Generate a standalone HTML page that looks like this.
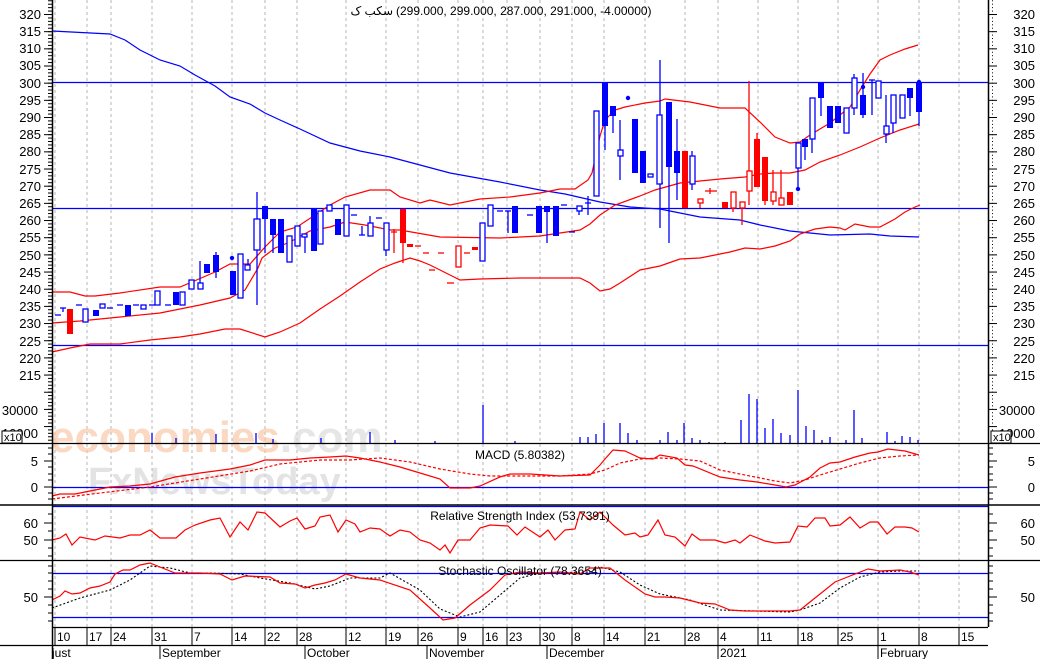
<!DOCTYPE html>
<html><head><meta charset="utf-8"><style>
html,body{margin:0;padding:0;background:#fff;width:1040px;height:659px;overflow:hidden}
svg{display:block}
text{font-family:"Liberation Sans","DejaVu Sans",sans-serif;font-size:13px;fill:#000}
.g{stroke:#b4b4b4;stroke-dasharray:3 3;stroke-width:1}
.f{fill:#0000ff}
.h{fill:#fff;stroke:#0000ff;stroke-width:1.3}
.r{fill:#ff0000}
.rh{fill:#fff;stroke:#ff0000;stroke-width:1.3}
.w{stroke:#0000ff;stroke-width:1.3}
.rw{stroke:#ff0000;stroke-width:1.3}
.rl{fill:none;stroke:#ff0000;stroke-width:1.2}
.bl{fill:none;stroke:#0000ff;stroke-width:1.2}
</style></head><body>
<svg width="1040" height="659" viewBox="0 0 1040 659" xmlns="http://www.w3.org/2000/svg">
<defs>
<pattern id="tk" x="0" y="14" width="8" height="3.433" patternUnits="userSpaceOnUse"><line x1="0" y1="0.5" x2="4" y2="0.5" stroke="#000" stroke-width="1"/></pattern>
<pattern id="tk2" x="0" y="14" width="8" height="17.17" patternUnits="userSpaceOnUse"><line x1="0" y1="0.5" x2="8" y2="0.5" stroke="#000" stroke-width="1"/></pattern>
</defs>
<!-- grid -->
<g class="g">
<line x1="55" y1="0" x2="55" y2="627"/><line x1="87" y1="0" x2="87" y2="627"/><line x1="111" y1="0" x2="111" y2="627"/><line x1="152" y1="0" x2="152" y2="627"/><line x1="192" y1="0" x2="192" y2="627"/><line x1="232" y1="0" x2="232" y2="627"/><line x1="265" y1="0" x2="265" y2="627"/><line x1="297" y1="0" x2="297" y2="627"/><line x1="346" y1="0" x2="346" y2="627"/><line x1="386" y1="0" x2="386" y2="627"/><line x1="418" y1="0" x2="418" y2="627"/><line x1="458" y1="0" x2="458" y2="627"/><line x1="483" y1="0" x2="483" y2="627"/><line x1="507" y1="0" x2="507" y2="627"/><line x1="540" y1="0" x2="540" y2="627"/><line x1="572" y1="0" x2="572" y2="627"/><line x1="604" y1="0" x2="604" y2="627"/><line x1="645" y1="0" x2="645" y2="627"/><line x1="685" y1="0" x2="685" y2="627"/><line x1="718" y1="0" x2="718" y2="627"/><line x1="758" y1="0" x2="758" y2="627"/><line x1="798" y1="0" x2="798" y2="627"/><line x1="838" y1="0" x2="838" y2="627"/><line x1="878" y1="0" x2="878" y2="627"/><line x1="919" y1="0" x2="919" y2="627"/><line x1="959" y1="0" x2="959" y2="627"/>
</g>
<!-- watermark -->
<text x="50" y="452" style="font-size:44px;fill:#f8c8a8;font-weight:bold;opacity:.7">economies<tspan style="fill:#dcdcdc">.com</tspan></text>
<text x="88" y="494" style="font-size:38px;fill:#d8d8d8;font-weight:bold;opacity:.7">FxNewsToday</text>
<!-- title -->
<text x="393" y="15" text-anchor="end" style="font-size:12px">سکب ک</text>
<text x="396" y="15" style="font-size:12px">(299.000, 299.000, 287.000, 291.000, -4.00000)</text>
<!-- horizontal price lines -->
<line x1="52" y1="82.5" x2="988" y2="82.5" stroke="#0000ff" stroke-width="1.3"/>
<line x1="52" y1="208.5" x2="988" y2="208.5" stroke="#0000ff" stroke-width="1.3"/>
<line x1="52" y1="345.5" x2="988" y2="345.5" stroke="#0000ff" stroke-width="1.3"/>
<!-- Bollinger & MA -->
<polyline class="bl" points="52,31 110,34 125,40 140,50 160,60 180,66 195,75 215,86 230,97 250,104 265,113 280,120 300,129 330,143 360,151 390,157 420,165 450,173 500,182 540,190 565,194 600,202 630,207 660,209 680,213 700,217 740,220 760,225 790,231 830,235 870,234 890,236 919,237"/>
<polyline class="rl" points="52,292 70,292 85,296 95,296 120,293 160,287 180,287 192,282 215,272 230,264 250,264 265,247 280,232 297,227 330,205 345,197 370,190 390,190 400,197 420,203 430,200 450,205 480,199 510,197 540,193 560,189 575,189 588,180 592,173 600,136 605,120 615,110 625,107 645,103 660,101 665,99 690,102 720,108 745,108 760,122 775,137 790,143 800,142 810,135 830,123 850,107 860,90 870,74 880,60 890,55 905,49 918,45"/>
<polyline class="rl" points="52,323 80,321 120,317 160,313 200,305 230,298 245,290 258,268 262,258 275,248 290,242 310,231 330,227 345,222 365,225 390,230 400,230 440,237 500,238 540,236 560,233 580,230 590,224 600,215 615,205 640,196 655,190 680,183 700,181 720,179 745,177 760,174 775,173 790,173 805,170 820,162 840,155 860,147 880,138 900,130 919,124"/>
<polyline class="rl" points="52,352 70,348 90,344 120,344 150,340 180,337 200,334 225,329 240,329 265,337 280,332 300,323 320,309 340,296 360,282 380,269 395,263 410,258 420,261 430,265 440,270 450,275 460,280 480,279 520,278 560,278 580,278 590,283 600,291 610,289 620,283 640,270 660,266 680,259 700,258 720,254 730,252 745,248 760,249 775,246 790,241 800,234 815,229 830,227 840,228 845,230 855,224 870,227 880,227 895,219 905,212 915,207 920,205"/>
<!-- candles -->
<g>
<line class="w" x1="55" y1="315" x2="61" y2="315"/><line class="w" x1="60" y1="308" x2="66" y2="308"/><line class="w" x1="63" y1="308" x2="63" y2="312"/>
<rect class="r" x="67" y="309" width="6" height="25"/>
<line class="w" x1="76" y1="305" x2="82" y2="305"/>
<rect class="h" x="83" y="309" width="5" height="13"/>
<rect class="f" x="93" y="310" width="6" height="6"/>
<rect class="h" x="100" y="304" width="5" height="4"/>
<line class="w" x1="107" y1="308" x2="113" y2="308"/><line class="w" x1="117" y1="305" x2="123" y2="305"/>
<rect class="f" x="125" y="305" width="6" height="11"/>
<line class="w" x1="133" y1="305" x2="139" y2="305"/>
<rect class="h" x="141" y="305" width="5" height="4"/>
<line class="w" x1="149" y1="305" x2="155" y2="305"/>
<rect class="h" x="155" y="291" width="5" height="14"/>
<line class="w" x1="165" y1="305" x2="171" y2="305"/>
<rect class="f" x="173" y="292" width="6" height="13"/>
<rect class="h" x="180" y="292" width="5" height="13"/>
<line class="w" x1="200" y1="261" x2="200" y2="283"/>
<rect class="h" x="189" y="280" width="5" height="9"/>
<rect class="h" x="198" y="283" width="5" height="6"/>
<rect class="f" x="204" y="264" width="6" height="9"/>
<line class="w" x1="216" y1="252" x2="216" y2="278"/><rect class="f" x="213" y="255" width="6" height="17"/>
<circle cx="232" cy="258" r="2.2" fill="#0000ff"/>
<rect class="f" x="230" y="271" width="6" height="24"/>
<rect class="h" x="238" y="254" width="5" height="44"/>
<line class="w" x1="248" y1="259" x2="248" y2="266"/><rect class="h" x="245" y="265" width="5" height="5"/>
<line class="w" x1="257" y1="192" x2="257" y2="305"/><rect class="h" x="254" y="219" width="6" height="31"/>
<line class="w" x1="265" y1="219" x2="265" y2="253"/><rect class="f" x="262" y="206" width="6" height="13"/>
<line class="w" x1="273" y1="219" x2="273" y2="253"/><rect class="f" x="270" y="219" width="6" height="16"/>
<rect class="f" x="278" y="219" width="6" height="34"/>
<rect class="h" x="287" y="236" width="5" height="26"/>
<rect class="h" x="295" y="226" width="5" height="20"/>
<line class="w" x1="305" y1="234" x2="305" y2="253"/><rect class="h" x="302" y="234" width="5" height="3"/>
<rect class="f" x="311" y="208" width="6" height="43"/>
<rect class="h" x="318" y="211" width="5" height="33"/>
<rect class="h" x="327" y="205" width="5" height="6"/>
<rect class="f" x="335" y="219" width="6" height="16"/>
<rect class="h" x="344" y="205" width="5" height="31"/>
<line class="w" x1="351" y1="215" x2="357" y2="215"/>
<line class="w" x1="359" y1="235" x2="365" y2="235"/><line class="w" x1="362" y1="226" x2="362" y2="235"/>
<line class="w" x1="370" y1="216" x2="370" y2="223"/><rect class="h" x="368" y="223" width="5" height="13"/>
<line class="w" x1="376" y1="218" x2="382" y2="218"/>
<line class="w" x1="386" y1="250" x2="386" y2="256"/><rect class="h" x="384" y="223" width="5" height="27"/>
<line class="rw" x1="394" y1="229" x2="394" y2="253"/><line class="rw" x1="391" y1="232" x2="397" y2="232"/>
<line class="rw" x1="403" y1="209" x2="403" y2="263"/><rect class="r" x="400" y="209" width="6" height="34"/>
<rect class="r" x="407" y="244" width="6" height="3"/>
<line class="rw" x1="415" y1="246" x2="421" y2="246"/><line class="rw" x1="423" y1="253" x2="429" y2="253"/>
<line class="rw" x1="429" y1="270" x2="435" y2="270"/><line class="rw" x1="438" y1="253" x2="444" y2="253"/>
<line class="rw" x1="447" y1="283" x2="454" y2="283"/>
<rect class="rh" x="456" y="246" width="5" height="21"/>
<line class="rw" x1="464" y1="253" x2="470" y2="253"/>
<rect class="r" x="472" y="247" width="6" height="3"/>
<rect class="h" x="480" y="223" width="5" height="38"/>
<rect class="h" x="488" y="205" width="5" height="21"/>
<line class="w" x1="497" y1="211" x2="503" y2="211"/>
<line class="w" x1="505" y1="211" x2="511" y2="211"/><line class="w" x1="508" y1="211" x2="508" y2="233"/>
<rect class="f" x="512" y="206" width="6" height="27"/>
<line class="w" x1="527" y1="215" x2="533" y2="215"/>
<rect class="f" x="536" y="206" width="6" height="27"/>
<line class="w" x1="547" y1="206" x2="547" y2="243"/><rect class="f" x="544" y="206" width="6" height="6"/>
<rect class="f" x="553" y="206" width="6" height="30"/>
<line class="w" x1="561" y1="205" x2="567" y2="205"/><line class="w" x1="569" y1="232" x2="575" y2="232"/>
<line class="w" x1="579" y1="206" x2="579" y2="215"/><rect class="h" x="577" y="206" width="5" height="5"/>
<line class="w" x1="588" y1="196" x2="588" y2="215"/><line class="w" x1="585" y1="203" x2="591" y2="203"/>
<rect class="h" x="594" y="111" width="5" height="85"/>
<line class="w" x1="605" y1="83" x2="605" y2="150"/><rect class="f" x="602" y="83" width="6" height="43"/>
<line class="w" x1="613" y1="106" x2="613" y2="133"/><rect class="f" x="610" y="106" width="6" height="10"/>
<line class="w" x1="620" y1="120" x2="620" y2="180"/><rect class="h" x="618" y="150" width="5" height="6"/>
<circle cx="628" cy="98" r="2.2" fill="#0000ff"/>
<rect class="f" x="632" y="119" width="6" height="54"/>
<rect class="f" x="640" y="151" width="6" height="32"/>
<rect class="h" x="648" y="174" width="5" height="3"/>
<line class="w" x1="657" y1="183" x2="663" y2="183"/>
<line class="w" x1="660" y1="60" x2="660" y2="228"/><rect class="h" x="657" y="115" width="5" height="69"/>
<line class="w" x1="669" y1="102" x2="669" y2="243"/><rect class="f" x="666" y="102" width="6" height="65"/>
<line class="w" x1="677" y1="119" x2="677" y2="200"/><rect class="f" x="674" y="151" width="6" height="22"/>
<rect class="r" x="682" y="151" width="6" height="57"/>
<line class="w" x1="692" y1="151" x2="692" y2="190"/><rect class="h" x="690" y="156" width="5" height="28"/>
<line class="rw" x1="700" y1="199" x2="700" y2="208"/><rect class="rh" x="698" y="199" width="5" height="4"/>
<line class="rw" x1="705" y1="191" x2="717" y2="191"/><line class="rw" x1="710" y1="188" x2="710" y2="194"/>
<rect class="r" x="722" y="202" width="6" height="6"/>
<line class="rw" x1="733" y1="192" x2="733" y2="212"/><rect class="rh" x="731" y="192" width="5" height="16"/>
<line class="rw" x1="742" y1="202" x2="742" y2="225"/><rect class="rh" x="740" y="202" width="5" height="6"/>
<line class="rw" x1="749" y1="81" x2="749" y2="205"/><rect class="rh" x="747" y="171" width="5" height="20"/>
<line class="rw" x1="757" y1="133" x2="757" y2="187"/><rect class="r" x="754" y="139" width="6" height="48"/>
<line class="rw" x1="765" y1="157" x2="765" y2="205"/><rect class="r" x="762" y="157" width="6" height="44"/>
<line class="rw" x1="773" y1="170" x2="773" y2="205"/><rect class="rh" x="771" y="192" width="5" height="9"/>
<line class="rw" x1="781" y1="170" x2="781" y2="205"/><rect class="rh" x="779" y="198" width="5" height="7"/>
<rect class="r" x="787" y="192" width="6" height="13"/>
<line class="w" x1="798" y1="143" x2="798" y2="189"/><rect class="h" x="796" y="143" width="5" height="25"/><circle cx="798" cy="189" r="2.2" fill="#0000ff"/>
<line class="w" x1="805" y1="139" x2="805" y2="160"/><rect class="f" x="802" y="139" width="6" height="8"/>
<line class="w" x1="812" y1="98" x2="812" y2="153"/><rect class="h" x="810" y="98" width="5" height="41"/>
<line class="w" x1="821" y1="83" x2="821" y2="116"/><rect class="f" x="818" y="83" width="6" height="15"/>
<rect class="f" x="827" y="106" width="6" height="22"/>
<rect class="f" x="835" y="106" width="6" height="17"/>
<rect class="h" x="844" y="108" width="5" height="25"/>
<line class="w" x1="854" y1="74" x2="854" y2="115"/><rect class="h" x="852" y="78" width="5" height="30"/>
<line class="w" x1="863" y1="73" x2="863" y2="118"/><rect class="f" x="860" y="95" width="6" height="20"/><circle cx="863" cy="87" r="2.2" fill="#0000ff"/>
<line class="w" x1="872" y1="80" x2="872" y2="115"/><line class="w" x1="869" y1="80" x2="875" y2="80"/>
<rect class="h" x="876" y="81" width="5" height="17"/>
<line class="w" x1="886" y1="95" x2="886" y2="143"/><rect class="h" x="884" y="126" width="5" height="8"/>
<line class="w" x1="893" y1="95" x2="893" y2="133"/><rect class="h" x="891" y="95" width="5" height="28"/>
<rect class="h" x="900" y="95" width="5" height="23"/>
<line class="w" x1="910" y1="88" x2="910" y2="116"/><rect class="f" x="907" y="88" width="6" height="10"/>
<line class="w" x1="919" y1="82" x2="919" y2="126"/><rect class="f" x="916" y="82" width="6" height="30"/><circle cx="919" cy="82" r="2.2" fill="#0000ff"/>
</g>
<!-- volume -->
<g stroke="#0000ff" stroke-width="1.3">
<line x1="152" y1="443" x2="152" y2="433"/><line x1="176" y1="443" x2="176" y2="438"/><line x1="216" y1="443" x2="216" y2="434"/><line x1="256" y1="443" x2="256" y2="433"/><line x1="273" y1="443" x2="273" y2="439"/><line x1="321" y1="443" x2="321" y2="438"/><line x1="370" y1="443" x2="370" y2="432"/><line x1="395" y1="443" x2="395" y2="440"/><line x1="435" y1="443" x2="435" y2="441"/><line x1="483" y1="443" x2="483" y2="405"/><line x1="515" y1="443" x2="515" y2="441"/><line x1="580" y1="443" x2="580" y2="437"/><line x1="588" y1="443" x2="588" y2="437"/><line x1="596" y1="443" x2="596" y2="434"/><line x1="604" y1="443" x2="604" y2="423"/><line x1="620" y1="443" x2="620" y2="423"/><line x1="628" y1="443" x2="628" y2="433"/><line x1="637" y1="443" x2="637" y2="440"/><line x1="660" y1="443" x2="660" y2="440"/><line x1="668" y1="443" x2="668" y2="432"/><line x1="677" y1="443" x2="677" y2="440"/><line x1="684" y1="443" x2="684" y2="423"/><line x1="692" y1="443" x2="692" y2="438"/><line x1="700" y1="443" x2="700" y2="440"/><line x1="709" y1="443" x2="709" y2="442"/><line x1="725" y1="443" x2="725" y2="442"/><line x1="741" y1="443" x2="741" y2="420"/><line x1="749" y1="443" x2="749" y2="394"/><line x1="757" y1="443" x2="757" y2="399"/><line x1="765" y1="443" x2="765" y2="428"/><line x1="773" y1="443" x2="773" y2="419"/><line x1="781" y1="443" x2="781" y2="433"/><line x1="790" y1="443" x2="790" y2="435"/><line x1="798" y1="443" x2="798" y2="390"/><line x1="806" y1="443" x2="806" y2="426"/><line x1="814" y1="443" x2="814" y2="430"/><line x1="822" y1="443" x2="822" y2="440"/><line x1="830" y1="443" x2="830" y2="437"/><line x1="846" y1="443" x2="846" y2="440"/><line x1="854" y1="443" x2="854" y2="410"/><line x1="862" y1="443" x2="862" y2="438"/><line x1="887" y1="443" x2="887" y2="432"/><line x1="895" y1="443" x2="895" y2="441"/><line x1="902" y1="443" x2="902" y2="436"/><line x1="910" y1="443" x2="910" y2="437"/><line x1="918" y1="443" x2="918" y2="440"/>
</g>
<!-- panel separators -->
<line x1="0" y1="443.5" x2="1040" y2="443.5" stroke="#000" stroke-width="1.3"/>
<line x1="52" y1="487.5" x2="988" y2="487.5" stroke="#0000ff" stroke-width="1.3"/>
<line x1="0" y1="505" x2="1040" y2="505" stroke="#000" stroke-width="1.5"/>
<line x1="52" y1="506.5" x2="988" y2="506.5" stroke="#0000ff" stroke-width="1.3"/>
<line x1="0" y1="560.5" x2="1040" y2="560.5" stroke="#000" stroke-width="1.3"/>
<line x1="52" y1="573.5" x2="988" y2="573.5" stroke="#0000ff" stroke-width="1.3"/>
<line x1="52" y1="617.5" x2="988" y2="617.5" stroke="#0000ff" stroke-width="1.3"/>
<!-- MACD -->
<polyline class="rl" points="52,496 60,494 75,494 90,491 110,487 130,486 150,484 175,477 200,473 230,469 250,465 265,460 290,460 310,458 330,457 346,456 360,458 380,462 400,467 420,473 440,479 450,488 470,488 480,486 500,477 510,474 530,474 560,476 590,475 600,465 605,459 613,450 625,451 640,458 653,459 660,455 677,458 685,465 693,466 720,477 740,480 757,482 775,485 786,487 795,485 810,477 820,468 830,463 840,462 855,457 870,453 878,452 888,449 905,451 919,455"/>
<polyline class="rl" stroke-dasharray="3 2" points="52,499 100,493 150,487 200,479 250,471 280,464 320,460 350,460 380,458 410,462 440,469 470,474 490,476 520,476 560,476 590,474 605,470 620,463 640,459 660,458 680,459 700,461 720,470 750,476 775,481 790,483 805,480 820,475 840,469 860,463 880,458 900,456 919,455"/>
<text x="520" y="459" text-anchor="middle" style="font-size:12px">MACD (5.80382)</text>
<!-- RSI -->
<polyline class="rl" points="52,540 60,538 66,534 72,545 80,537 95,540 105,536 120,538 130,535 140,535 150,530 160,538 176,538 185,530 195,525 210,520 220,518 230,537 240,522 248,530 257,512 265,513 280,527 290,521 297,518 305,529 315,526 320,517 330,515 338,532 346,520 355,524 360,532 370,528 380,529 390,536 400,530 410,532 420,540 430,543 440,550 445,545 450,553 458,540 470,540 480,528 490,525 508,526 517,535 525,527 540,537 548,530 555,540 565,530 575,529 580,512 590,520 600,512 613,525 625,535 635,533 640,537 648,535 658,520 665,535 675,537 685,546 692,534 700,540 715,540 725,543 735,540 740,543 750,535 765,541 775,543 790,542 798,526 807,527 815,518 825,518 830,526 840,525 850,517 860,528 870,522 878,522 887,534 895,527 905,527 912,528 919,532"/>
<text x="520" y="520" text-anchor="middle" style="font-size:12px">Relative Strength Index (53.7391)</text>
<!-- Stoch -->
<polyline fill="none" stroke="#000" stroke-width="1.1" stroke-dasharray="2 2" points="52,608 80,598 110,590 130,580 150,566 170,568 190,573 210,573 240,574 260,578 290,583 315,589 330,586 350,578 380,578 390,573 420,590 440,609 460,617 480,612 500,595 520,578 540,573 590,572 600,567 620,572 640,585 660,594 690,600 720,610 790,612 800,610 820,603 840,588 860,577 880,572 900,571 919,571"/>
<polyline class="rl" points="52,600 60,596 65,591 72,594 80,593 90,588 100,586 110,582 115,574 123,570 130,570 140,565 150,563 160,567 175,573 200,573 220,574 232,580 245,576 270,577 280,583 295,584 305,588 315,585 325,583 335,580 346,574 360,578 380,580 410,590 430,608 443,620 455,618 470,605 490,590 505,575 520,572 540,573 560,572 580,574 590,568 610,568 625,580 645,594 655,597 665,597 680,598 700,603 715,604 730,610 745,611 790,611 800,610 820,594 835,582 850,576 868,569 880,571 900,570 910,572 919,575"/>
<text x="520" y="575" text-anchor="middle" style="font-size:12px">Stochastic Oscillator (78.3654)</text>
<!-- axes -->
<line x1="52.5" y1="0" x2="52.5" y2="659" stroke="#000" stroke-width="1.5"/>
<line x1="988.5" y1="0" x2="988.5" y2="627" stroke="#000" stroke-width="1.5"/>
<rect x="48" y="0" width="4" height="443" fill="url(#tk)"/>
<rect x="44" y="0" width="8" height="443" fill="url(#tk2)"/>
<rect x="989" y="0" width="4" height="443" fill="url(#tk)"/>
<rect x="989" y="0" width="8" height="443" fill="url(#tk2)"/>
<g stroke="#000" stroke-width="1">
<line x1="44" y1="461" x2="52" y2="461"/><line x1="44" y1="487" x2="52" y2="487"/><line x1="48" y1="448" x2="52" y2="448"/><line x1="48" y1="454" x2="52" y2="454"/><line x1="48" y1="467" x2="52" y2="467"/><line x1="48" y1="474" x2="52" y2="474"/><line x1="48" y1="480" x2="52" y2="480"/><line x1="48" y1="493" x2="52" y2="493"/><line x1="48" y1="499" x2="52" y2="499"/>
<line x1="44" y1="523" x2="52" y2="523"/><line x1="44" y1="540" x2="52" y2="540"/><line x1="48" y1="514" x2="52" y2="514"/><line x1="48" y1="531" x2="52" y2="531"/><line x1="48" y1="548" x2="52" y2="548"/><line x1="48" y1="556" x2="52" y2="556"/>
<line x1="44" y1="597" x2="52" y2="597"/><line x1="48" y1="566" x2="52" y2="566"/><line x1="48" y1="573" x2="52" y2="573"/><line x1="48" y1="581" x2="52" y2="581"/><line x1="48" y1="589" x2="52" y2="589"/><line x1="48" y1="605" x2="52" y2="605"/><line x1="48" y1="613" x2="52" y2="613"/><line x1="48" y1="621" x2="52" y2="621"/>
<line x1="989" y1="461" x2="997" y2="461"/><line x1="989" y1="487" x2="997" y2="487"/><line x1="989" y1="448" x2="993" y2="448"/><line x1="989" y1="454" x2="993" y2="454"/><line x1="989" y1="467" x2="993" y2="467"/><line x1="989" y1="474" x2="993" y2="474"/><line x1="989" y1="480" x2="993" y2="480"/><line x1="989" y1="493" x2="993" y2="493"/><line x1="989" y1="499" x2="993" y2="499"/>
<line x1="989" y1="523" x2="997" y2="523"/><line x1="989" y1="540" x2="997" y2="540"/><line x1="989" y1="514" x2="993" y2="514"/><line x1="989" y1="531" x2="993" y2="531"/><line x1="989" y1="548" x2="993" y2="548"/><line x1="989" y1="556" x2="993" y2="556"/>
<line x1="989" y1="597" x2="997" y2="597"/><line x1="989" y1="566" x2="993" y2="566"/><line x1="989" y1="573" x2="993" y2="573"/><line x1="989" y1="581" x2="993" y2="581"/><line x1="989" y1="589" x2="993" y2="589"/><line x1="989" y1="605" x2="993" y2="605"/><line x1="989" y1="613" x2="993" y2="613"/><line x1="989" y1="621" x2="993" y2="621"/>
</g>
<!-- price labels -->
<g text-anchor="end">
<text x="41" y="19">320</text><text x="41" y="36">315</text><text x="41" y="53">310</text><text x="41" y="70">305</text><text x="41" y="88">300</text><text x="41" y="105">295</text><text x="41" y="122">290</text><text x="41" y="139">285</text><text x="41" y="156">280</text><text x="41" y="174">275</text><text x="41" y="191">270</text><text x="41" y="208">265</text><text x="41" y="225">260</text><text x="41" y="242">255</text><text x="41" y="260">250</text><text x="41" y="277">245</text><text x="41" y="294">240</text><text x="41" y="311">235</text><text x="41" y="328">230</text><text x="41" y="346">225</text><text x="41" y="363">220</text><text x="41" y="380">215</text>
<text x="38" y="415">30000</text><text x="38" y="438">10000</text>
<text x="38" y="466">5</text><text x="38" y="492">0</text><text x="38" y="528">60</text><text x="38" y="545">50</text><text x="38" y="602">50</text>
<text x="1035" y="19">320</text><text x="1035" y="36">315</text><text x="1035" y="53">310</text><text x="1035" y="70">305</text><text x="1035" y="88">300</text><text x="1035" y="105">295</text><text x="1035" y="122">290</text><text x="1035" y="139">285</text><text x="1035" y="156">280</text><text x="1035" y="174">275</text><text x="1035" y="191">270</text><text x="1035" y="208">265</text><text x="1035" y="225">260</text><text x="1035" y="242">255</text><text x="1035" y="260">250</text><text x="1035" y="277">245</text><text x="1035" y="294">240</text><text x="1035" y="311">235</text><text x="1035" y="328">230</text><text x="1035" y="346">225</text><text x="1035" y="363">220</text><text x="1035" y="380">215</text>
<text x="1035" y="415">30000</text><text x="1035" y="438">10000</text>
<text x="1035" y="466">5</text><text x="1035" y="492">0</text><text x="1035" y="528">60</text><text x="1035" y="545">50</text><text x="1035" y="602">50</text>
</g>
<rect x="2" y="431" width="20" height="12" fill="#fff" stroke="#000" stroke-width="1"/><text x="4" y="441" style="font-size:11px">x10</text>
<rect x="991" y="431" width="20" height="12" fill="#fff" stroke="#000" stroke-width="1"/><text x="993" y="441" style="font-size:11px">x10</text>
<!-- date axis -->
<line x1="52" y1="627.5" x2="988" y2="627.5" stroke="#000" stroke-width="1.3"/>
<line x1="0" y1="645.5" x2="988" y2="645.5" stroke="#000" stroke-width="1.3"/>
<g stroke="#000" stroke-width="1">
<line x1="55" y1="627" x2="55" y2="645"/><line x1="87" y1="627" x2="87" y2="645"/><line x1="111" y1="627" x2="111" y2="645"/><line x1="152" y1="627" x2="152" y2="645"/><line x1="192" y1="627" x2="192" y2="645"/><line x1="232" y1="627" x2="232" y2="645"/><line x1="265" y1="627" x2="265" y2="645"/><line x1="297" y1="627" x2="297" y2="645"/><line x1="346" y1="627" x2="346" y2="645"/><line x1="386" y1="627" x2="386" y2="645"/><line x1="418" y1="627" x2="418" y2="645"/><line x1="458" y1="627" x2="458" y2="645"/><line x1="483" y1="627" x2="483" y2="645"/><line x1="507" y1="627" x2="507" y2="645"/><line x1="540" y1="627" x2="540" y2="645"/><line x1="572" y1="627" x2="572" y2="645"/><line x1="604" y1="627" x2="604" y2="645"/><line x1="645" y1="627" x2="645" y2="645"/><line x1="685" y1="627" x2="685" y2="645"/><line x1="718" y1="627" x2="718" y2="645"/><line x1="758" y1="627" x2="758" y2="645"/><line x1="798" y1="627" x2="798" y2="645"/><line x1="838" y1="627" x2="838" y2="645"/><line x1="878" y1="627" x2="878" y2="645"/><line x1="919" y1="627" x2="919" y2="645"/><line x1="959" y1="627" x2="959" y2="645"/>
<line x1="160" y1="645" x2="160" y2="659"/><line x1="305" y1="645" x2="305" y2="659"/><line x1="427" y1="645" x2="427" y2="659"/><line x1="547" y1="645" x2="547" y2="659"/><line x1="718" y1="645" x2="718" y2="659"/><line x1="878" y1="645" x2="878" y2="659"/>
</g>
<g>
<text x="57" y="641" style="font-size:12px">10</text><text x="89" y="641" style="font-size:12px">17</text><text x="113" y="641" style="font-size:12px">24</text><text x="154" y="641" style="font-size:12px">31</text><text x="194" y="641" style="font-size:12px">7</text><text x="234" y="641" style="font-size:12px">14</text><text x="267" y="641" style="font-size:12px">22</text><text x="299" y="641" style="font-size:12px">28</text><text x="348" y="641" style="font-size:12px">12</text><text x="388" y="641" style="font-size:12px">19</text><text x="420" y="641" style="font-size:12px">26</text><text x="460" y="641" style="font-size:12px">9</text><text x="485" y="641" style="font-size:12px">16</text><text x="509" y="641" style="font-size:12px">23</text><text x="542" y="641" style="font-size:12px">30</text><text x="574" y="641" style="font-size:12px">8</text><text x="606" y="641" style="font-size:12px">14</text><text x="647" y="641" style="font-size:12px">21</text><text x="687" y="641" style="font-size:12px">28</text><text x="720" y="641" style="font-size:12px">4</text><text x="760" y="641" style="font-size:12px">11</text><text x="800" y="641" style="font-size:12px">18</text><text x="840" y="641" style="font-size:12px">25</text><text x="880" y="641" style="font-size:12px">1</text><text x="921" y="641" style="font-size:12px">8</text><text x="961" y="641" style="font-size:12px">15</text>
<text x="52" y="657" style="font-size:12px">just</text><text x="162" y="657" style="font-size:12px">September</text><text x="307" y="657" style="font-size:12px">October</text><text x="429" y="657" style="font-size:12px">November</text><text x="549" y="657" style="font-size:12px">December</text><text x="720" y="657" style="font-size:12px">2021</text><text x="880" y="657" style="font-size:12px">February</text>
</g>
</svg>
</body></html>
